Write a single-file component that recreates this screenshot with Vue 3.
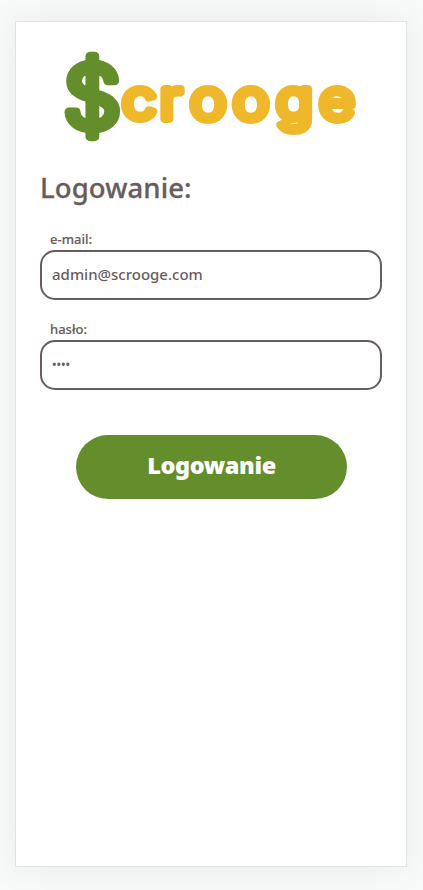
<script setup>
import { ref } from 'vue'

const email = ref('admin@scrooge.com')
const password = ref('demo')
</script>

<template>
  <main class="card">
    <svg class="logo" width="300" height="110" viewBox="60 42 300 110" role="img" aria-label="Scrooge">
      <g transform="scale(1.06 1)">
        <text class="dollar" x="60" y="128.5">$</text>
      </g>
      <g transform="scale(1.12 1)">
        <text class="word" y="119" x="109 142.6 169.7 207.9 246.5 285">crooge</text>
      </g>
    </svg>
    <h1 class="title">Logowanie:</h1>
    <form class="form" @submit.prevent>
      <label class="label" for="email">e-mail:</label>
      <input id="email" v-model="email" class="field" type="text" />
      <label class="label" for="password">hasło:</label>
      <input id="password" v-model="password" class="field secret" type="password" />
      <button class="submit" type="submit">Logowanie</button>
    </form>
  </main>
</template>

<style>
body {
  background: #f8faf9;
}
</style>

<style scoped>
.card {
  box-sizing: border-box;
  width: 392px;
  height: 846px;
  margin: 21px 0 23px 15px;
  padding: 20px 24px 0;
  background: #fff;
  border: 1px solid #e0e3e2;
  box-shadow: 0 0 40px rgba(0, 0, 0, 0.06);
  color: #685c5c;
  font-family: "Noto Sans", sans-serif;
  font-weight: 500;
}
.logo {
  display: block;
  margin-left: 20px;
}
.logo text {
  font-family: Inter, sans-serif;
  stroke-linejoin: round;
}
.dollar {
  font-size: 86px;
  font-weight: 300;
  fill: #648e2b;
  stroke: #648e2b;
  stroke-width: 9px;
}
.word {
  font-size: 54.5px;
  font-weight: 300;
  fill: #efb82b;
  stroke: #efb82b;
  stroke-width: 8px;
}
.title {
  margin: 13px 0 0;
  height: 45px;
  font-size: 27.5px;
  line-height: 45px;
  font-weight: 500;
  letter-spacing: 0.1px;
  -webkit-text-stroke: 0.3px #685c5c;
}
.form {
  display: flex;
  flex-direction: column;
}
.label {
  height: 20px;
  margin-top: 20px;
  padding-left: 10px;
  font-size: 13px;
  line-height: 18px;
  font-weight: 500;
  -webkit-text-stroke: 0.15px #685c5c;
}
.field {
  box-sizing: border-box;
  width: 342px;
  height: 50px;
  padding: 0 10px 3px;
  border: 2px solid #685c5c;
  border-radius: 15px;
  outline: none;
  background: #fff;
  color: #685c5c;
  font: 500 15px "Noto Sans", sans-serif;
}
.secret {
  padding-bottom: 1px;
  font-size: 12px;
}
.submit {
  width: 271px;
  height: 64px;
  margin: 45px 0 0 36px;
  padding: 0 0 5px;
  border: 0;
  border-radius: 32px;
  background: #648e2b;
  color: #fff;
  font: 900 23.5px "Noto Sans", sans-serif;
  letter-spacing: -0.4px;
}
</style>
